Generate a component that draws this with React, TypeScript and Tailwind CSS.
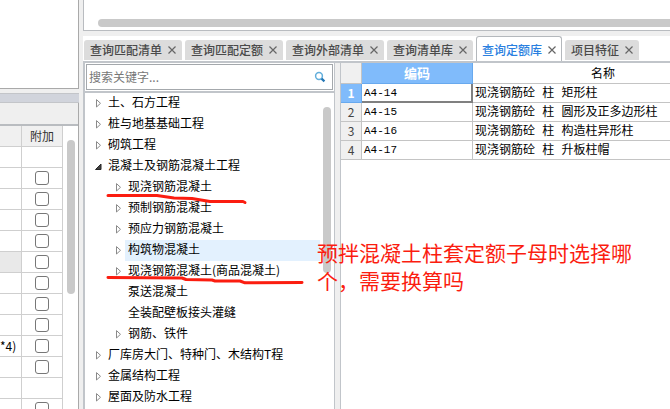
import React from 'react';

interface TreeNode {
    label: string;
    state?: 'open' | 'closed';
    highlighted?: boolean;
    children?: TreeNode[];
}

interface Tab {
    label: string;
    active?: boolean;
}

interface ExtraRow {
    text?: string;
    check: boolean;
    shaded?: boolean;
}

const tabs: Tab[] = [
    { label: '查询匹配清单' },
    { label: '查询匹配定额' },
    { label: '查询外部清单' },
    { label: '查询清单库' },
    { label: '查询定额库', active: true },
    { label: '项目特征' },
];

const tree: TreeNode[] = [
    { label: '土、石方工程', state: 'closed' },
    { label: '桩与地基基础工程', state: 'closed' },
    { label: '砌筑工程', state: 'closed' },
    {
        label: '混凝土及钢筋混凝土工程',
        state: 'open',
        children: [
            { label: '现浇钢筋混凝土', state: 'closed' },
            { label: '预制钢筋混凝土', state: 'closed' },
            { label: '预应力钢筋混凝土', state: 'closed' },
            { label: '构筑物混凝土', state: 'closed', highlighted: true },
            { label: '现浇钢筋混凝土(商品混凝土)', state: 'closed' },
            { label: '泵送混凝土' },
            { label: '全装配壁板接头灌缝' },
            { label: '钢筋、铁件', state: 'closed' },
        ],
    },
    { label: '厂库房大门、特种门、木结构T程', state: 'closed' },
    { label: '金属结构工程', state: 'closed' },
    { label: '屋面及防水工程', state: 'closed' },
];

const quotas = [
    { code: 'A4-14', name: '现浇钢筋砼 柱 矩形柱' },
    { code: 'A4-15', name: '现浇钢筋砼 柱 圆形及正多边形柱' },
    { code: 'A4-16', name: '现浇钢筋砼 柱 构造柱异形柱' },
    { code: 'A4-17', name: '现浇钢筋砼 柱 升板柱帽' },
];

const extraRows: ExtraRow[] = [
    { check: false },
    { check: true },
    { check: true },
    { check: true },
    { check: true },
    { check: true, shaded: true },
    { check: true },
    { check: true },
    { check: true },
    { text: '*4)', check: true },
    { check: true },
    { check: false },
    { check: true },
];

const CloseIcon = () => (
    <svg className="w-2 h-2 shrink-0" viewBox="0 0 8 8" fill="none" stroke="#666" strokeWidth="1.2">
        <path d="M0.5 0.5L7.5 7.5M7.5 0.5L0.5 7.5" />
    </svg>
);

const SearchIcon = () => (
    <svg className="w-3 h-3" viewBox="0 0 12 12" fill="none">
        <circle cx="5" cy="5" r="3.4" stroke="#62aedb" strokeWidth="1.5" />
        <path d="M7.6 7.6L10.4 10.4" stroke="#2577b5" strokeWidth="2.2" />
    </svg>
);

const Arrow: React.FC<{ state?: 'open' | 'closed' }> = ({ state }) => (
    <svg className="w-2 h-[9px] shrink-0" viewBox="0 0 8 9" aria-hidden="true">
        {state === 'closed' && <path d="M1.5 0.6L5.5 4.3L1.5 8Z" fill="#fff" stroke="#8a8a8a" />}
        {state === 'open' && <path d="M6 2V7.5H0.5Z" fill="#404040" stroke="#262626" />}
    </svg>
);

const TreeItem: React.FC<{ node: TreeNode }> = ({ node }) => (
    <li>
        <div className="flex items-center h-[21px]">
            <Arrow state={node.state} />
            <button
                className={
                    node.highlighted
                        ? 'flex-1 h-full ml-[2px] pl-[3px] pb-1 text-left whitespace-nowrap bg-[#e3f1fe]'
                        : 'flex-1 h-full ml-[2px] pl-[3px] pb-1 text-left whitespace-nowrap'
                }
            >
                {node.label}
            </button>
        </div>
        {node.children && (
            <ul className="pl-5">
                {node.children.map((child) => (
                    <TreeItem key={child.label} node={child} />
                ))}
            </ul>
        )}
    </li>
);

const LeftPane = () => (
    <div className="w-[79px] shrink-0 flex flex-col">
        <div className="h-[89px] shrink-0 bg-white border-r border-b border-[#a9a9a9]" />
        <div className="mt-1 h-[10px] shrink-0 bg-[#d1d4dc] border-y border-[#c3c5c9]" />
        <div className="flex-1 flex flex-col min-h-0 border-r border-[#a9a9a9]">
            <div className="h-[23px] shrink-0 bg-[#efefef] border-b-2 border-[#b9bcc0]" />
            <div className="flex-1 min-h-0 flex items-start bg-white">
                <table className="w-[63px] table-fixed border-separate border-spacing-0">
                    <thead>
                        <tr className="h-[21px] bg-[#f0f0f0] text-[#333]">
                            <th className="w-[22px] p-0 border-r border-b border-[#cfcfcf]" />
                            <th className="p-0 font-normal border-r border-b border-[#cfcfcf]">附加</th>
                        </tr>
                    </thead>
                    <tbody>
                        {extraRows.map((row, i) => (
                            <tr key={i} className="h-[21px]">
                                <td
                                    className={
                                        row.shaded
                                            ? 'p-0 border-r border-b border-[#cfcfcf] bg-[#e9e9e9]'
                                            : 'p-0 border-r border-b border-[#cfcfcf]'
                                    }
                                >
                                    {row.text}
                                </td>
                                <td className="p-0 border-r border-b border-[#cfcfcf]">
                                    {row.check && (
                                        <input
                                            type="checkbox"
                                            aria-label={`附加 ${i + 1}`}
                                            className="block mx-auto w-[14px] h-[14px] appearance-none rounded-[3px] border border-[#777] bg-white"
                                        />
                                    )}
                                </td>
                            </tr>
                        ))}
                    </tbody>
                </table>
                <div className="mt-[14px] ml-1 w-2 h-[154px] rounded-full bg-[#c9c9c9]" />
            </div>
        </div>
    </div>
);

const TabStrip = () => (
    <div className="flex items-end h-[25px] shrink-0 pl-px gap-[3px] bg-white">
        {tabs.map((tab) => (
            <button
                key={tab.label}
                className={
                    tab.active
                        ? 'flex items-center gap-[6px] h-[25px] px-[5px] pt-1 pb-[2px] whitespace-nowrap font-medium text-[#2a7fe0] bg-white border border-b-0 border-[#b4b8bc] rounded-t-[3px]'
                        : 'flex items-center gap-[6px] h-5 mb-px px-[6px] whitespace-nowrap font-medium text-[#4a4a4a] bg-[#dcdcdc] rounded-t-[3px]'
                }
            >
                {tab.label}
                <CloseIcon />
            </button>
        ))}
    </div>
);

const TreePane = () => (
    <div className="w-[252px] shrink-0 flex flex-col min-h-0 bg-white border-l-2 border-r border-[#c1c5ca]">
        <div className="p-px shrink-0 border-b-2 border-[#c1c5ca]">
            <label className="flex items-center h-[26px] pl-[2px] pr-[6px] border border-[#a4a8ac]">
                <input
                    type="text"
                    placeholder="搜索关键字..."
                    aria-label="搜索关键字"
                    className="flex-1 min-w-0 outline-none placeholder:text-[#777]"
                />
                <SearchIcon />
            </label>
        </div>
        <div className="flex-1 min-h-0 flex items-start overflow-hidden">
            <ul className="flex-1 pl-[10px]">
                {tree.map((node) => (
                    <TreeItem key={node.label} node={node} />
                ))}
            </ul>
            <div className="mt-[14px] mx-[3px] w-2 h-[166px] shrink-0 rounded-full bg-[#c9c9c9]" />
        </div>
    </div>
);

const QuotaTable = () => (
    <div className="flex-1 min-w-0 overflow-hidden bg-white border-l border-[#c1c5ca]">
        <table className="w-[393px] table-fixed border-separate border-spacing-0 text-black">
            <thead>
                <tr className="h-[21px]">
                    <th className="w-[21px] p-0 bg-[#f0f0f0] border-r border-b border-[#c4c4c4]" />
                    <th className="w-[111px] p-0 text-[13px] font-bold text-white bg-[#80bbfb] border-r border-b border-[#68a9ee]">
                        编码
                    </th>
                    <th className="p-0 font-normal border-r border-b border-[#c4c4c4]">名称</th>
                </tr>
            </thead>
            <tbody>
                {quotas.map((quota, i) => (
                    <tr key={quota.code} className="h-[19px]">
                        <th
                            className={
                                i === 0
                                    ? 'p-0 font-bold text-white bg-[#80bbfb] border-r border-b border-[#68a9ee]'
                                    : 'p-0 font-normal text-[#444] bg-[#f0f0f0] border-r border-b border-[#c4c4c4]'
                            }
                        >
                            {i + 1}
                        </th>
                        <td
                            className={
                                i === 0
                                    ? 'p-0 pl-[2px] font-["Liberation_Mono",monospace] text-[11px] border-r-2 border-b-2 border-[#808080]'
                                    : 'p-0 pl-[2px] font-["Liberation_Mono",monospace] text-[11px] border-r border-b border-[#c4c4c4]'
                            }
                        >
                            {quota.code}
                        </td>
                        <td className='p-0 pt-px pl-[2px] whitespace-nowrap font-["Liberation_Mono","Noto_Sans_CJK_SC",monospace] border-r border-b border-[#c4c4c4]'>
                            {quota.name}
                        </td>
                    </tr>
                ))}
            </tbody>
        </table>
    </div>
);

// Hand-drawn marks and the question written over the window
const Annotations = () => (
    <>
        <svg
            className="absolute left-0 top-0 w-[320px] h-[300px] pointer-events-none"
            viewBox="0 0 320 300"
            fill="none"
            stroke="#fb1d10"
            strokeWidth="3"
            strokeLinecap="round"
            strokeLinejoin="round"
        >
            <path d="M108 195.5H157L174 198L192 198.5L210 201.5H243L245 202.5" />
            <path d="M108 277.5L182 278L186 279.5L212 280L215 281H240L245 282.8L302 282.5" />
        </svg>
        <p className="absolute left-[317px] top-[238px] w-[320px] text-[21px] leading-[28px] text-[#fb1d10] pointer-events-none">
            预拌混凝土柱套定额子母时选择哪个，需要换算吗
        </p>
    </>
);

const App = () => (
    <div className='relative flex h-screen overflow-hidden bg-[#efefef] text-[12px] leading-[16px] text-black font-["Noto_Sans_CJK_SC",sans-serif]'>
        <LeftPane />
        <div className="flex-1 min-w-0 flex flex-col ml-1">
            <div className="h-[31px] shrink-0 pt-[19px] pl-[14px] bg-white border-l border-b border-[#b9bcc0]">
                <div className="h-2 rounded-l-full bg-[#c9c9c9]" />
            </div>
            <div className="mt-[5px] flex-1 min-h-0 flex flex-col">
                <TabStrip />
                <div className="flex-1 min-h-0 flex gap-[5px] border-t-2 border-[#c1c5ca]">
                    <TreePane />
                    <QuotaTable />
                </div>
            </div>
        </div>
        <Annotations />
    </div>
);

export default App;
